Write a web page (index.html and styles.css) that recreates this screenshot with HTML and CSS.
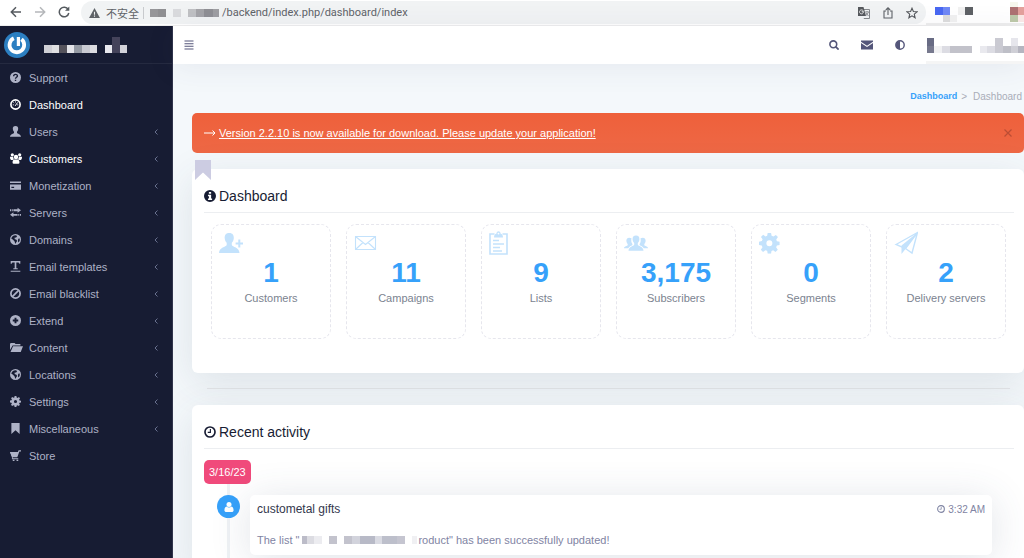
FILE: index.html
```html
<!DOCTYPE html>
<html lang="en">
<head>
<meta charset="utf-8">
<title>Dashboard</title>
<link rel="stylesheet" href="styles.css">
</head>
<body>
<svg class="sprite" aria-hidden="true">
  <symbol id="user" viewBox="0 0 16 16"><path d="M8 0C5.200 0 3.900 1.800 4.100 4.500c.1 1.700.7 3 1.700 3.900v1.700C5.400 11.300.3 11.700 0 15.500h16c-.3-3.800-5.400-4.200-5.800-5.400V8.400c1-.9 1.600-2.200 1.700-3.900C12.100 1.800 10.800 0 8 0z"/></symbol>
  <symbol id="globe" viewBox="0 0 16 16"><path fill-rule="evenodd" d="M8 0a8 8 0 1 0 0 16A8 8 0 0 0 8 0zm.3 1.800L10.500 3 9 5 6.500 5.500 7 7.500l2 .5 1.500 2L9 12l-.5 2.200C7 13 7 11.500 6.500 10.500L4 8 1.900 7A6.300 6.300 0 0 1 8.300 1.800zM12 7l2.200-.5a6.300 6.300 0 0 1-2 6L11.500 10z"/></symbol>
  <symbol id="clock" viewBox="0 0 16 16"><circle cx="8" cy="8" r="6.700" fill="none" stroke="currentColor" stroke-width="2.200"/><path d="M8.500 4v4.500H5" fill="none" stroke="currentColor" stroke-width="1.500"/></symbol>
  <symbol id="cog" viewBox="0 0 16 16"><path fill-rule="evenodd" d="M6.700 0h2.600l.4 2.200 1.400.6L13 1.500 14.600 3.200l-1.300 1.800.5 1.400 2.200.4v2.500l-2.200.4-.6 1.400 1.300 1.800-1.800 1.800-1.800-1.300-1.300.6L9.300 16H6.700l-.4-2.200-1.400-.5-1.800 1.300L1.400 12.900l1.300-1.800-.6-1.400L0 9.300V6.700l2.200-.4.600-1.400-1.300-1.800 1.700-1.700L5 2.700l1.300-.5zM8 5.700a2.300 2.300 0 1 0 0 4.600 2.300 2.300 0 0 0 0-4.600z"/></symbol>
  <symbol id="bookmark" viewBox="0 0 16 20"><path d="M0 0h16v20l-8-7.500L0 20z"/></symbol>
  <symbol id="chevron" viewBox="0 0 6 8"><path d="M4.500 1.500L2 4l2.500 2.500" fill="none" stroke="currentColor"/></symbol>
</svg>

<header class="browser">
  <nav class="browser-nav">
    <button type="button" aria-label="Back"><svg viewBox="0 0 12 12"><path d="M11 6H1.500M6 1.300L1.300 6 6 10.700" fill="none" stroke="#555a5f" stroke-width="1.500"/></svg></button>
    <button type="button" aria-label="Forward"><svg viewBox="0 0 12 12"><path d="M1 6h9.500M6 1.300L10.700 6 6 10.700" fill="none" stroke="#b5b7ba" stroke-width="1.500"/></svg></button>
    <button type="button" aria-label="Reload"><svg viewBox="0 0 12 12"><path d="M10.200 3.500A4.800 4.800 0 1 0 10.800 7" fill="none" stroke="#555a5f" stroke-width="1.500"/><path d="M11.300.500v4.300H7z" fill="#555a5f"/></svg></button>
  </nav>
  <div class="address">
    <svg class="warning" viewBox="0 0 12 11"><path fill="#5f6368" fill-rule="evenodd" d="M6 0l6 11H0zM5.400 4v3.500h1.200V4zm0 4.300v1.200h1.200V8.300z"/></svg>
    <span class="insecure" lang="zh">不安全</span>
    <i class="divider"></i>
    <svg class="mosaic-host" viewBox="0 0 69 8" preserveAspectRatio="none" aria-hidden="true"><path fill="#969699" d="M0 0h8v8H0z"/><path fill="#8f8f92" d="M8 0h8v8H8z"/><path fill="#d9dadd" d="M23 0h8v8h-8z"/><path fill="#bfc0c3" d="M38 0h8v8h-8z"/><path fill="#a4a4a8" d="M46 0h8v8h-8z"/><path fill="#8f8f94" d="M54 0h9v8h-9z"/><path fill="#9e9ea2" d="M63 0h6v8h-6z"/></svg>
    <span class="path">/backend/index.php/dashboard/index</span>
    <div class="address-actions">
      <button type="button" aria-label="Translate"><svg viewBox="0 0 12 12"><path d="M5 2.500h6.500v9H5.800" fill="none" stroke="#85888c"/><path d="M0 0h5.500l2.500 9H0z" fill="#56595d"/><path d="M5.500 4.500A2 2 0 1 0 5.200 6V4.700H3.700" fill="none" stroke="#fff" stroke-width=".8"/><path d="M7 5h4M9 4v1M7.500 9l3-3.500M8 6l2.500 3" stroke="#77797d" stroke-width=".8"/></svg></button>
      <button type="button" aria-label="Share"><svg viewBox="0 0 12 12"><path d="M4 4H2v7h8V4H8M6 8V1M3.800 3L6 .800 8.200 3" fill="none" stroke="#5f6368" stroke-width="1.100"/></svg></button>
      <button type="button" aria-label="Bookmark"><svg viewBox="0 0 12 12"><path d="M6 1.200l1.400 3.300 3.600.3-2.700 2.400.8 3.600L6 8.900l-3.100 1.900.8-3.600L1 4.800l3.600-.3z" fill="none" stroke="#55585c" stroke-width="1.100"/></svg></button>
    </div>
  </div>
  <svg class="mosaic-ext" viewBox="0 0 98 30" aria-hidden="true"><path fill="#eee" d="M0 23h98v7H0z"/><path fill="#4968f2" d="M9 7h8v8H9z"/><path fill="#6f88f5" d="M17 7h7v8h-7z"/><path fill="#ddd" d="M17 15h7v7h-7z"/><path fill="#f1f1f1" d="M24 15h7v7h-7zM32 7h7v8h-7z"/><path fill="#5e6165" d="M39 7h8v8h-8z"/><path fill="#f6f7ed" d="M84 2h8v5h-8z"/><path fill="#ad7172" d="M84 7h8v8h-8z"/><path fill="#e3a09c" d="M92 7h6v8h-6z"/><path fill="#bdc9a9" d="M84 15h8v7h-8z"/><path fill="#fae9e7" d="M92 15h6v7h-6z"/></svg>
</header>

<div class="app">
  <aside class="sidebar">
    <div class="brand">
      <svg class="logo" viewBox="0 0 26 26"><circle cx="13" cy="13" r="13" fill="#2c7fc1"/><path d="M9.800 6.300A7.300 7.300 0 1 0 17.500 7.300" fill="none" stroke="#fff" stroke-width="3.800"/><path d="M12.800 5h3.200v9h-3.200z" fill="#fff"/></svg>
      <svg class="mosaic-name" viewBox="0 0 83 16" aria-hidden="true"><path fill="#cfcfd5" d="M0 8h8v8H0z"/><path fill="#dfdfe2" d="M8 8h7v8H8z"/><path fill="#55535c" d="M15 8h8v8h-8z"/><path fill="#e4e4e9" d="M23 8h7v8h-7z"/><path fill="#959aa4" d="M30 8h8v8h-8z"/><path fill="#c9cad2" d="M38 8h8v8h-8z"/><path fill="#dcdce1" d="M46 8h7v8h-7z"/><path fill="#e8e8ee" d="M61 8h7v8h-7z"/><path fill="#44435a" d="M68 0h8v16h-8z"/><path fill="#d2d2d9" d="M76 8h7v8h-7z"/></svg>
    </div>
    <nav>
      <ul class="menu">
        <li><a href="#"><svg viewBox="0 0 16 16"><circle cx="8" cy="8" r="8"/><path d="M5.300 6c0-3.500 5.500-3.300 5.500-.3C10.800 7.800 8 7.500 8 9.700M8 11.200v2" fill="none" stroke="#171c33" stroke-width="2"/></svg>Support</a></li>
        <li class="active"><a href="#"><svg viewBox="0 0 16 16"><circle cx="8" cy="8" r="6.700" fill="none" stroke="currentColor" stroke-width="2.400"/><path d="M4 8.500h1.500M5 5l1 1M8 3.500V5M12 8.500h-1.500M7.500 10L11 5" stroke="currentColor" stroke-width="1.400"/></svg>Dashboard</a></li>
        <li><a href="#"><svg viewBox="0 0 16 16"><use href="#user"/></svg>Users<svg class="chevron"><use href="#chevron"/></svg></a></li>
        <li class="active"><a href="#"><svg class="wide" viewBox="0 0 18 16"><circle cx="3.500" cy="2.500" r="2.400"/><circle cx="14.500" cy="2.500" r="2.400"/><circle cx="9" cy="5.700" r="3.400"/><path d="M0 5.300h4.800c0 2 .5 3 1.600 4-1 .1-1.800.4-2.300 1H1.800C.5 9.500 0 8 0 5.300zM18 5.300h-4.800c0 2-.5 3-1.600 4 1 .1 1.800.4 2.300 1h2.300c1.300-.8 1.800-2.300 1.800-5zM6.500 9.500h5c2.400.5 3 3 2.600 5.500l-1.300 1H5.200L4 15c-.5-2.500.1-5 2.500-5.500z"/></svg>Customers<svg class="chevron"><use href="#chevron"/></svg></a></li>
        <li><a href="#"><svg viewBox="0 0 16 16"><path fill-rule="evenodd" d="M0 2h16v2.300H0zM0 6.500h16V14H0zm2 3.300v2h4v-2z"/></svg>Monetization<svg class="chevron"><use href="#chevron"/></svg></a></li>
        <li><a href="#"><svg viewBox="0 0 16 16"><path d="M5 3.400h6V1l5 3.700-5 3.700V6H5zM2.500 3.400h1.500V6H2.500zM0 3.400h1.500V6H0zM11 10H5V7.600L0 11.300 5 15v-2.400h6zM12 10h1.500v2.600H12zM14.500 10H16v2.600h-1.500z"/></svg>Servers<svg class="chevron"><use href="#chevron"/></svg></a></li>
        <li><a href="#"><svg viewBox="0 0 16 16"><use href="#globe"/></svg>Domains<svg class="chevron"><use href="#chevron"/></svg></a></li>
        <li><a href="#"><svg viewBox="0 0 16 16"><path d="M1 0h14v4h-1.300L12.500 2H9.200v8.500h2V12H4.800v-1.500h2V2H3.500L2.300 4H1zM1 14h14v1.800H1z"/></svg>Email templates<svg class="chevron"><use href="#chevron"/></svg></a></li>
        <li><a href="#"><svg viewBox="0 0 16 16"><path d="M3.500 12.500l9-9" stroke="currentColor" stroke-width="2.500"/><circle cx="8" cy="8" r="6.700" fill="none" stroke="currentColor" stroke-width="2.500"/></svg>Email blacklist<svg class="chevron"><use href="#chevron"/></svg></a></li>
        <li><a href="#"><svg viewBox="0 0 16 16"><path fill-rule="evenodd" d="M8 0a8 8 0 1 0 0 16A8 8 0 0 0 8 0zM6.600 4h2.800v2.600H12v2.800H9.400V12H6.600V9.400H4V6.600h2.600z"/></svg>Extend<svg class="chevron"><use href="#chevron"/></svg></a></li>
        <li><a href="#"><svg class="folder" viewBox="0 0 20 16"><path d="M0 2.500L1 1h6l1.500 1.500H16V5H4L0 12zM4.700 6H20l-3.500 9H.800z"/></svg>Content<svg class="chevron"><use href="#chevron"/></svg></a></li>
        <li><a href="#"><svg viewBox="0 0 16 16"><use href="#globe"/></svg>Locations<svg class="chevron"><use href="#chevron"/></svg></a></li>
        <li><a href="#"><svg viewBox="0 0 16 16"><use href="#cog"/></svg>Settings<svg class="chevron"><use href="#chevron"/></svg></a></li>
        <li><a href="#"><svg viewBox="0 0 16 16"><path d="M2 0h12v16l-6-5.500L2 16z"/></svg>Miscellaneous<svg class="chevron"><use href="#chevron"/></svg></a></li>
        <li><a href="#"><svg viewBox="0 0 16 16"><path d="M0 3h11.500l1-2.500H16V2h-2.400l-3 8.500H4V12h8v1.500H2.800V10zM4 14h2.500v2H4zM9.500 14H12v2H9.500z"/><path d="M0 3h12l-2 6.500H2.500z"/></svg>Store</a></li>
      </ul>
    </nav>
  </aside>

  <div class="page">
    <div class="topbar">
      <button type="button" aria-label="Toggle menu"><svg viewBox="0 0 10 10"><path d="M.500 1h9M.500 3.700h9M.500 6.300h9M.500 9h9" stroke="#54567a" stroke-width="1.100"/></svg></button>
      <div class="topbar-tools">
        <button type="button" aria-label="Search"><svg viewBox="0 0 10 10"><circle cx="4.300" cy="4.300" r="3.400" fill="none" stroke="#54567a" stroke-width="1.600"/><path d="M6.600 6.600L9.600 9.600" stroke="#54567a" stroke-width="1.800"/></svg></button>
        <button type="button" aria-label="Messages"><svg class="mail" viewBox="0 0 12 10"><path d="M0 .500h12v1.200L6 5.800 0 1.700zM0 3l6 4 6-4v6.500H0z" fill="#54567a"/></svg></button>
        <button type="button" aria-label="Theme"><svg viewBox="0 0 10 10"><circle cx="5" cy="5" r="4.200" fill="none" stroke="#54567a" stroke-width="1.400"/><path d="M5 1a4 4 0 0 0 0 8z" fill="#54567a"/></svg></button>
      </div>
      <svg class="mosaic-account" viewBox="0 0 98 26" aria-hidden="true"><path fill="#f5f5f5" d="M0 23h98v3H0z"/><path fill="#686b84" d="M1 0h7v8H1z"/><path fill="#77798e" d="M1 8h7v7H1z"/><path fill="#f1f1f3" d="M8 8h8v7H8z"/><path fill="#dcdce3" d="M16 8h8v7h-8zM61 8h8v7h-8z"/><path fill="#c2c2ca" d="M24 8h22v7H24z"/><path fill="#e9e9ee" d="M54 8h7v7h-7z"/><path fill="#cacad2" d="M69 0h8v15h-8z"/><path fill="#bebfc7" d="M77 8h8v7h-8z"/><path fill="#e6e6ec" d="M85 0h7v8h-7z"/><path fill="#cfcfd6" d="M85 8h7v7h-7z"/><path fill="#b5b5c0" d="M92 8h6v7h-6z"/></svg>
    </div>

    <main class="content">
      <nav class="breadcrumb" aria-label="Breadcrumb"><a href="#">Dashboard</a><span class="sep">&gt;</span><span>Dashboard</span></nav>

      <div class="alert" role="alert">
        <p><svg class="arrow" viewBox="0 0 12 8"><path d="M0 4h11M8.500 1.500L11 4 8.500 6.500" fill="none" stroke="currentColor"/></svg><a href="#">Version 2.2.10 is now available for download. Please update your application!</a></p>
        <button type="button" aria-label="Close"><svg viewBox="0 0 8 8"><path d="M.500.500l7 7M7.500.500l-7 7" stroke="#bb4d34" stroke-width="1.200"/></svg></button>
      </div>

      <section class="card summary">
        <svg class="ribbon" viewBox="0 0 16 20"><use href="#bookmark"/></svg>
        <h2><svg viewBox="0 0 16 16"><path fill-rule="evenodd" d="M8 0a8 8 0 1 0 0 16A8 8 0 0 0 8 0zM6.500 2.500h3V5h-3zM5.300 6.300h4.200v5h1.300v2H5.300v-2h1.300v-3H5.300z"/></svg>Dashboard</h2>
        <ul class="tiles">
          <li><svg viewBox="0 0 24 24"><path d="M10 2C6.900 2 5.400 4.200 5.700 7.300c.2 2 1 3.500 2 4.500v2.300C7 16 .300 16.500 0 22h20.500c-.3-5.500-7-6-7.700-7.900v-2.300c1-1 1.800-2.500 2-4.500C15 4.200 13.500 2 10.400 2zM19.300 8.500h2v3H24v2h-2.700v3h-2v-3h-2.700v-2h2.700z"/></svg><strong>1</strong><span>Customers</span></li>
          <li><svg viewBox="0 0 24 24"><path d="M1.500 5.500h20v13H1.500zM1.500 5.500l10 8 10-8M1.500 18.500l7.500-7M21.500 18.500l-7.500-7" fill="none" stroke="currentColor" stroke-width="1.100"/></svg><strong>11</strong><span>Campaigns</span></li>
          <li><svg viewBox="0 0 24 24"><path d="M5.500 3H1v20h17V3h-4.500" fill="none" stroke="currentColor" stroke-width="1.600"/><path fill-rule="evenodd" d="M5 6.500c0-2.500 1-3.500 2.500-4C7.500-.500 11.500-.500 11.500 2.500 13 3 14 4 14 6.500zM9.500 1.700a.9.900 0 1 0 0 1.800.9.900 0 0 0 0-1.800z"/><path d="M4 9.500h6M4 13h11M4 16.500h7M4 20h9" stroke="currentColor" stroke-width="1.300"/></svg><strong>9</strong><span>Lists</span></li>
          <li><svg viewBox="0 0 24 24"><path d="M12 4.500c-2.500 0-3.600 1.600-3.400 4 .1 1.500.7 2.800 1.600 3.500v1.800c-.5 1.500-5.500 1.500-5.700 6h15c-.2-4.500-5.200-4.500-5.700-6V12c.9-.7 1.500-2 1.600-3.500.2-2.400-.9-4-3.400-4zM7.500 7.200C4 5.500 2 8 2.400 10c.1 1.500.7 2.400 1.300 3v1.200C3.300 15.300 0 15 0 17.300h4.200c1-1.600 2.800-2.300 4.200-3.200v-1.200C7.200 11.500 7 9 7.500 7.200zM16.500 7.200C20 5.500 22 8 21.600 10c-.1 1.500-.7 2.400-1.300 3v1.200c.4 1.100 3.700.8 3.700 3.100h-4.200c-1-1.600-2.800-2.300-4.200-3.200v-1.200c1.200-1.400 1.400-3.900.9-5.700z"/></svg><strong>3,175</strong><span>Subscribers</span></li>
          <li><svg viewBox="0 -1.500 18.500 18.500"><use href="#cog" width="16" height="16"/></svg><strong>0</strong><span>Segments</span></li>
          <li><svg viewBox="0 0 24 24"><path d="M2 13.500L23.500 1.500 18 22l-6.500-4.500zM11.500 17.500L23.500 1.500" fill="none" stroke="currentColor" stroke-width="1.400"/><path d="M23.500 1.500L7.500 14.500v8.500l4-5z"/></svg><strong>2</strong><span>Delivery servers</span></li>
        </ul>
      </section>

      <hr class="rule">

      <section class="card">
        <h2><svg viewBox="0 0 16 16"><use href="#clock"/></svg>Recent activity</h2>
        <div class="timeline">
          <time class="day">3/16/23</time>
          <div class="event">
            <span class="avatar"><svg viewBox="0 0 10 10"><circle cx="5" cy="2.600" r="2.500"/><path d="M2.500 4.500C.8 5 .3 7 .500 9l1 1h7l1-1c.2-2-.3-4-2-4.500a4 4 0 0 1-5 0z"/></svg></span>
            <article class="bubble">
              <header><h3>custometal gifts</h3><time><svg viewBox="0 0 16 16"><use href="#clock"/></svg>3:32 AM</time></header>
              <p>The list "<svg class="mosaic-list" viewBox="0 0 115 8" aria-hidden="true"><path fill="#bcbcc8" d="M0 0h5v8H0z"/><path fill="#dcdce2" d="M5 0h7v8H5z"/><path fill="#ececf0" d="M12 0h8v8h-8z"/><path fill="#c3c3cd" d="M27 0h8v8h-8zM42 0h8v8h-8z"/><path fill="#d2d3dc" d="M50 0h8v8h-8z"/><path fill="#b8bac7" d="M58 0h15v8H58z"/><path fill="#dadbe3" d="M73 0h7v8h-7z"/><path fill="#bdbfcb" d="M80 0h15v8H80z"/><path fill="#c5c5d0" d="M95 0h8v8h-8z"/><path fill="#f0f0f3" d="M110 0h5v8h-5z"/></svg>roduct" has been successfully updated!</p>
            </article>
          </div>
        </div>
      </section>
    </main>
  </div>
</div>
</body>
</html>
```

FILE: styles.css
```css
* { box-sizing: border-box; }
body {
  margin: 0;
  height: 100vh;
  display: flex;
  flex-direction: column;
  overflow: hidden;
  font-family: "Liberation Sans", "Noto Sans CJK SC", sans-serif;
  font-size: 11px;
  color: #171c33;
  background: #fff;
}
svg { display: block; fill: currentColor; flex: none; }
button { display: flex; padding: 0; border: 0; background: none; }
a { color: inherit; }
ul { list-style: none; margin: 0; padding: 0; }
h2, h3, p { margin: 0; font-weight: normal; }
.sprite { position: absolute; width: 0; height: 0; }

/* Browser bar */
.browser {
  flex: none;
  height: 26px;
  display: flex;
  align-items: flex-start;
  border-bottom: 1px solid #eee;
}
.browser-nav { display: flex; gap: 12px; width: 81px; padding: 6px 0 0 10px; }
.browser-nav svg { width: 12px; height: 12px; }
.address {
  flex: 1;
  display: flex;
  align-items: center;
  height: 23px;
  margin-top: 1px;
  padding: 0 8px;
  border-radius: 12px;
  background: #f1f3f4;
  color: #5f6368;
}
.warning { width: 11px; height: 10px; }
.insecure { margin-left: 6px; font-family: "Noto Sans CJK SC", sans-serif; font-size: 11px; line-height: 16px; }
.divider { width: 1px; height: 12px; margin: 0 6px 0 4px; background: #c8cacd; }
.mosaic-host { width: 69px; height: 8px; }
.path { margin-left: 3px; font-family: Roboto, sans-serif; font-size: 11px; white-space: nowrap; }
.address-actions { display: flex; gap: 12px; margin-left: auto; }
.address-actions svg { width: 12px; height: 12px; }
.mosaic-ext { width: 98px; height: 30px; }

/* Application shell */
.app { flex: 1; min-height: 0; display: flex; }
.sidebar { flex: none; width: 173px; background: #171c33; border-right: 1px solid #30344b; }
.brand {
  display: flex;
  align-items: center;
  gap: 14px;
  height: 38px;
  padding-left: 4px;
  border-bottom: 1px solid #252a40;
}
.logo { width: 26px; height: 26px; }
.mosaic-name { width: 83px; height: 16px; }
.menu a {
  display: flex;
  align-items: center;
  height: 27px;
  padding: 0 13px 0 10px;
  color: #aeb2c6;
  text-decoration: none;
}
.menu .active a { color: #fff; }
.menu svg { width: 11px; height: 11px; margin-right: 8px; }
.menu svg.wide { width: 12px; margin-right: 7px; }
.menu svg.folder { width: 13px; margin-right: 6px; }
.menu svg.chevron { width: 6px; height: 8px; margin: 0 0 0 auto; color: #68708e; }

.page { flex: 1; min-width: 0; display: flex; flex-direction: column; }
.topbar {
  flex: none;
  display: flex;
  align-items: center;
  height: 38px;
  padding-left: 11px;
  background: #fff;
  box-shadow: 0 4px 30px rgba(60, 70, 100, 0.08);
  z-index: 1;
}
.topbar svg { width: 10px; height: 10px; }
.topbar-tools { display: flex; gap: 22px; margin-left: auto; }
.topbar svg.mail { width: 12px; }
.topbar svg.mosaic-account { width: 98px; height: 26px; margin: 11px 0 0 21px; }

.content { flex: 1; min-height: 0; overflow: hidden; padding: 24px 0 0 19px; background: #f4f8fb; }
.breadcrumb {
  display: flex;
  justify-content: flex-end;
  padding-right: 2px;
  font-size: 10px;
  line-height: 17px;
  color: #a9adb8;
}
.breadcrumb a { color: #36a1fa; font-size: 9px; font-weight: bold; text-decoration: none; }
.sep { margin: 0 6px 0 4px; }
.alert {
  display: flex;
  align-items: center;
  justify-content: space-between;
  height: 40px;
  margin-top: 8px;
  padding: 0 12px;
  border-radius: 5px;
  background: linear-gradient(#ee603b, #ee6845);
  color: #fff;
}
.alert p { display: flex; align-items: center; gap: 3px; }
.alert svg { width: 8px; height: 8px; }
.alert svg.arrow { width: 12px; }

.card {
  position: relative;
  padding: 0 10px 0 12px;
  border-radius: 6px;
  background: #fff;
  box-shadow: 0 10px 40px rgba(60, 70, 90, 0.12);
}
.card h2 {
  display: flex;
  align-items: center;
  gap: 3px;
  height: 44px;
  padding-top: 10px;
  border-bottom: 1px solid #eceef1;
  font-size: 14px;
}
.card h2 svg { width: 12px; height: 12px; }
.summary { margin-top: 16px; padding-bottom: 34px; }
.ribbon { position: absolute; left: 3px; top: -9px; width: 16px; height: 20px; color: #cccce2; }
.tiles {
  display: grid;
  grid-template-columns: repeat(6, 1fr);
  gap: 15px;
  padding: 11px 8px 0 7px;
}
.tiles li {
  display: flex;
  flex-direction: column;
  align-items: center;
  height: 115px;
  padding: 6px 7px;
  border: 1px dashed #e6e6ed;
  border-radius: 10px;
}
.tiles svg { width: 24px; height: 24px; align-self: flex-start; color: #c3e2fc; }
.tiles strong { font-size: 28px; line-height: 36px; color: #36a1fa; }
.tiles span { font-size: 11px; line-height: 14px; color: #7b8390; white-space: nowrap; }
.rule { height: 1px; margin: 15px 14px 16px 15px; border: 0; background: #e6e8eb; }

.timeline { position: relative; padding-top: 11px; }
.timeline::before {
  content: "";
  position: absolute;
  left: 23px;
  top: 12px;
  bottom: 0;
  width: 3px;
  background: #eff2f5;
}
.day {
  position: relative;
  display: inline-block;
  padding: 0 5px;
  border-radius: 5px;
  background: #f04a7b;
  color: #fff;
  line-height: 24px;
}
.event { position: relative; display: flex; gap: 10px; margin-top: 11px; padding: 0 22px 20px 13px; }
.avatar {
  display: grid;
  place-items: center;
  width: 23px;
  height: 23px;
  border-radius: 50%;
  background: #36a1fa;
  color: #fff;
}
.avatar svg { width: 10px; height: 10px; }
.bubble {
  flex: 1;
  padding: 5px 7px 7px;
  border-radius: 5px;
  background: #fff;
  box-shadow: 0 5px 40px rgba(60, 80, 110, 0.16);
}
.bubble header { display: flex; justify-content: space-between; align-items: center; }
.bubble h3 { font-size: 12px; line-height: 18px; color: #33374d; }
.bubble time { display: flex; align-items: center; gap: 3px; font-size: 10px; color: #7f84a3; }
.bubble time svg { width: 8px; height: 8px; }
.bubble p { display: flex; align-items: center; margin-top: 14px; line-height: 16px; color: #7f84a3; white-space: pre; }
.mosaic-list { width: 115px; height: 8px; margin: 0 1px 0 3px; }
```
